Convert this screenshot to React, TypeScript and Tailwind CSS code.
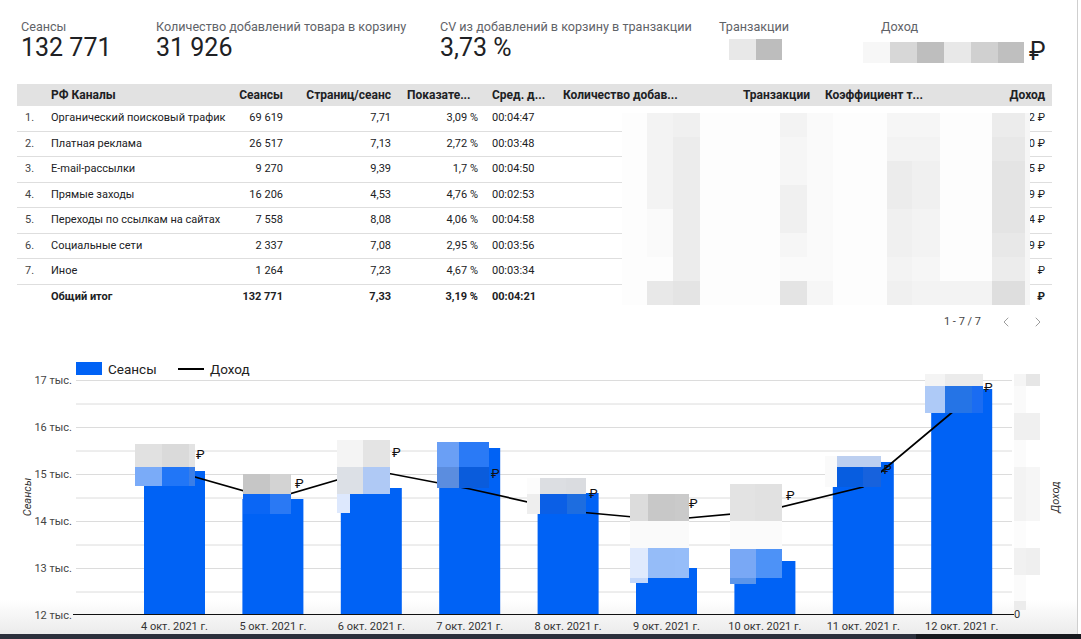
import React from 'react'
import { ChevronLeft, ChevronRight } from 'lucide-react'

type Cell = { x: number; y: number; w: number; h: number; c: string }

const rows = [
    ['1.', 'Органический поисковый трафик', '69 619', '7,71', '3,09 %', '00:04:47', '2 ₽'],
    ['2.', 'Платная реклама', '26 517', '7,13', '2,72 %', '00:03:48', '0 ₽'],
    ['3.', 'E-mail-рассылки', '9 270', '9,39', '1,7 %', '00:04:50', '5 ₽'],
    ['4.', 'Прямые заходы', '16 206', '4,53', '4,76 %', '00:02:53', '9 ₽'],
    ['5.', 'Переходы по ссылкам на сайтах', '7 558', '8,08', '4,06 %', '00:04:58', '4 ₽'],
    ['6.', 'Социальные сети', '2 337', '7,08', '2,95 %', '00:03:56', '9 ₽'],
    ['7.', 'Иное', '1 264', '7,23', '4,67 %', '00:03:34', '₽'],
]

// pixelated cover over the hidden columns of the table
const shade: Record<string, string> = {
    w: 'bg-[#fdfdfd]',
    v: 'bg-[#fafafa]',
    u: 'bg-[#f6f6f6]',
    t: 'bg-[#f3f3f3]',
    s: 'bg-[#f0f0f0]',
    r: 'bg-[#ececec]',
    q: 'bg-[#e8e8e8]',
    p: 'bg-[#e4e4e4]',
    o: 'bg-[#dedede]',
}
const coverRows = [
    'wtswtvwuuwru',
    'wtrwuvwttwqu',
    'wtrwuvwrswpu',
    'wtrwsvwrswpu',
    'wvrwsvwstwpu',
    'wvrwuvwstwqu',
    'wwrwvvwtuwru',
    'wqpwpuwsttou',
]

const ticks = [17, 16, 15, 14, 13, 12]
const days = ['4', '5', '6', '7', '8', '9', '10', '11', '12']
const tops = [471, 499, 488, 448, 493, 568, 561, 462, 389]
const centers = days.map((_, i) => 174.5 + i * 98.4)
const revenue: [number, number][] = [
    [174, 471], [272, 499], [371, 470], [470, 489], [568, 511],
    [666, 520], [765, 511], [863, 487], [961, 405],
]

const blurred: Cell[] = [
    // 4 окт
    { x: 135, y: 444, w: 27, h: 23, c: '#e1e1e1' }, { x: 162, y: 444, w: 27, h: 23, c: '#dadada' }, { x: 189, y: 444, w: 6, h: 23, c: '#e3e3e3' },
    { x: 135, y: 467, w: 27, h: 19, c: '#7aabf8' }, { x: 162, y: 467, w: 27, h: 19, c: '#2176f7' }, { x: 189, y: 467, w: 6, h: 19, c: '#3a7ee8' },
    // 5 окт
    { x: 243, y: 474, w: 27, h: 20, c: '#c6c6c6' }, { x: 270, y: 474, w: 21, h: 20, c: '#d3d3d3' },
    { x: 243, y: 494, w: 27, h: 20, c: '#0a66f5' }, { x: 270, y: 494, w: 21, h: 20, c: '#2a79f4' },
    // 6 окт
    { x: 337, y: 440, w: 26, h: 27, c: '#f4f4f4' }, { x: 363, y: 440, w: 27, h: 27, c: '#e4e4e4' },
    { x: 337, y: 467, w: 26, h: 27, c: '#dce0e6' }, { x: 363, y: 467, w: 27, h: 27, c: '#afc9f5' },
    { x: 337, y: 494, w: 13, h: 19, c: '#dde8fd' },
    // 7 окт
    { x: 437, y: 442, w: 22, h: 25, c: '#6a9ff5' }, { x: 459, y: 442, w: 30, h: 25, c: '#2a7af6' },
    { x: 437, y: 467, w: 22, h: 21, c: '#5b8ddf' }, { x: 459, y: 467, w: 30, h: 21, c: '#0a5cdc' },
    // 8 окт
    { x: 527, y: 478, w: 13, h: 16, c: '#fcfcfc' }, { x: 540, y: 478, w: 26, h: 16, c: '#dcdee2' }, { x: 566, y: 478, w: 20, h: 16, c: '#dadce0' },
    { x: 527, y: 494, w: 13, h: 20, c: '#eeeeee' }, { x: 540, y: 494, w: 27, h: 20, c: '#0b5fe6' }, { x: 567, y: 494, w: 19, h: 20, c: '#1d6de0' },
    // 9 окт
    { x: 630, y: 494, w: 18, h: 27, c: '#dcdcdc' }, { x: 648, y: 494, w: 27, h: 27, c: '#c8c8c8' }, { x: 675, y: 494, w: 14, h: 27, c: '#cacaca' },
    { x: 630, y: 521, w: 59, h: 27, c: '#fafafa' },
    { x: 630, y: 548, w: 18, h: 30, c: '#e0eafd' }, { x: 648, y: 548, w: 27, h: 30, c: '#95bcf8' }, { x: 675, y: 548, w: 14, h: 30, c: '#96bdf9' },
    { x: 630, y: 578, w: 18, h: 5, c: '#c4d8fb' },
    // 10 окт
    { x: 730, y: 484, w: 25, h: 37, c: '#e3e3e3' }, { x: 755, y: 484, w: 27, h: 37, c: '#e1e1e1' },
    { x: 730, y: 521, w: 52, h: 28, c: '#fbfbfb' },
    { x: 730, y: 549, w: 26, h: 29, c: '#79a8f5' }, { x: 756, y: 549, w: 26, h: 29, c: '#4d92f7' },
    { x: 730, y: 578, w: 26, h: 6, c: '#5b95ea' },
    // 11 окт
    { x: 825, y: 456, w: 12, h: 31, c: '#fafafa' }, { x: 837, y: 456, w: 44, h: 11, c: '#bccff0' },
    { x: 837, y: 467, w: 26, h: 20, c: '#075de0' }, { x: 863, y: 467, w: 18, h: 20, c: '#1762dd' },
    // 12 окт
    { x: 925, y: 374, w: 20, h: 12, c: '#f4f4f4' }, { x: 945, y: 374, w: 38, h: 12, c: '#ebebeb' },
    { x: 925, y: 386, w: 20, h: 27, c: '#aecaf7' }, { x: 945, y: 386, w: 27, h: 27, c: '#2574e6' }, { x: 972, y: 386, w: 11, h: 27, c: '#1a6cf2' },
    // right axis labels
    { x: 1014, y: 374, w: 12, h: 12, c: '#f5f5f5' }, { x: 1026, y: 374, w: 14, h: 12, c: '#e6e6e6' },
    { x: 1014, y: 386, w: 12, h: 27, c: '#fafafa' },
    { x: 1014, y: 413, w: 26, h: 27, c: '#f0f0f0' },
    { x: 1014, y: 440, w: 12, h: 27, c: '#fbfbfb' },
    { x: 1014, y: 467, w: 12, h: 54, c: '#f3f3f3' }, { x: 1026, y: 467, w: 14, h: 54, c: '#f6f6f6' },
    { x: 1014, y: 521, w: 12, h: 27, c: '#fcfcfc' },
    { x: 1014, y: 548, w: 12, h: 27, c: '#f1f1f1' }, { x: 1026, y: 548, w: 14, h: 27, c: '#efefef' },
    { x: 1014, y: 575, w: 12, h: 26, c: '#fbfbfb' },
    { x: 1014, y: 601, w: 12, h: 9, c: '#ececec' },
]

const rubles: [number, number][] = [
    [196, 459], [295, 488], [392, 457], [491, 478], [589, 498], [689, 508], [786, 500], [883, 474], [984, 392],
]

function Kpi({ label, value, className }: { label: string; value?: string; className: string }) {
    return (
        <div className={className}>
            <div className="text-[12.6px] leading-[16px] text-[#5f6368] whitespace-nowrap">{label}</div>
            {value && <div className="text-[25px] leading-[26px] text-[#202124]">{value}</div>}
        </div>
    )
}

function Chart() {
    const poly = revenue.map(([x, y]) => `${x},${y}`).join(' ')
    return (
        <svg width={1077} height={294} viewBox="0 340 1077 294" fontFamily="Roboto, sans-serif" className="block">
            <defs>
                <linearGradient id="floor" x1="0" y1="0" x2="0" y2="1">
                    <stop offset="0" stopColor="#ffffff" />
                    <stop offset="1" stopColor="#ebebeb" />
                </linearGradient>
            </defs>
            <rect x={0} y={600} width={1077} height={34} fill="url(#floor)" />

            {/* legend */}
            <rect x={76} y={362} width={26} height={13} fill="#0062f5" />
            <text x={108} y={374} fontSize={13.5} fill="#222">Сеансы</text>
            <line x1={178} y1={369} x2={204} y2={369} stroke="#000" strokeWidth={2} />
            <text x={210} y={374} fontSize={13.5} fill="#222">Доход</text>

            {/* grid */}
            {ticks.map((t, i) => (
                <g key={t}>
                    <text x={72} y={384 + i * 47} fontSize={11} fill="#444" textAnchor="end">{t} тыс.</text>
                    {i < 5 && <line x1={76} x2={1012} y1={380.5 + i * 47} y2={380.5 + i * 47} stroke="#dcdcdc" />}
                    {i < 5 && <line x1={76} x2={1012} y1={404 + i * 47} y2={404 + i * 47} stroke="#dcdcdc" />}
                </g>
            ))}

            {centers.map((cx, i) => (
                <rect key={i} x={cx - 30.5} y={tops[i]} width={61} height={614 - tops[i]} fill="#0062f5" />
            ))}

            <line x1={73} x2={1014} y1={614.5} y2={614.5} stroke="#111" strokeWidth={1.2} />
            <text x={1014} y={618} fontSize={11} fill="#333">0</text>

            <polyline points={poly} fill="none" stroke="#000" strokeWidth={1.7} />

            {blurred.map((b, i) => (
                <rect key={i} x={b.x} y={b.y} width={b.w} height={b.h} fill={b.c} />
            ))}
            {rubles.map(([x, y], i) => (
                <text key={i} x={x} y={y} fontSize={13} fill="#111">₽</text>
            ))}

            {centers.map((cx, i) => (
                <text key={i} x={cx} y={630} fontSize={11} fill="#333" textAnchor="middle">{days[i]} окт. 2021 г.</text>
            ))}

            <text x={31} y={497} fontSize={11} fill="#333" fontStyle="italic" textAnchor="middle" transform="rotate(-90 31 497)">Сеансы</text>
            <text x={1059} y={497} fontSize={11} fill="#333" fontStyle="italic" textAnchor="middle" transform="rotate(-90 1059 497)">Доход</text>
        </svg>
    )
}

export default function App() {
    return (
        <div className="w-[1081px] h-[639px] flex flex-col bg-white overflow-hidden font-['Roboto',sans-serif]">
            <div className="flex flex-1 min-h-0">
                <div className="w-[1077px] flex flex-col">
                    {/* KPI scorecards */}
                    <div className="h-[84px] flex pt-[19px] pl-[21px]">
                        <Kpi className="w-[135px]" label="Сеансы" value="132 771" />
                        <Kpi className="w-[284px]" label="Количество добавлений товара в корзину" value="31 926" />
                        <Kpi className="w-[279px]" label="CV из добавлений в корзину в транзакции" value="3,73 %" />
                        <div className="w-[144px]">
                            <div className="text-[12.6px] leading-[16px] text-[#5f6368]">Транзакции</div>
                            <div className="flex ml-[10px] mt-[4px]">
                                <div className="w-[27px] h-[21px] bg-[#e8e8e8]" />
                                <div className="w-[26px] h-[21px] bg-[#bdbdbd]" />
                            </div>
                        </div>
                        <div className="flex-1">
                            <div className="text-[12.6px] leading-[16px] text-[#5f6368] pl-[18px]">Доход</div>
                            <div className="flex items-center mt-[4px]">
                                <div className="w-[27px] h-[21px] bg-[#f7f7f7]" />
                                <div className="w-[27px] h-[21px] bg-[#d7d7d7]" />
                                <div className="w-[27px] h-[21px] bg-[#bebebe]" />
                                <div className="w-[27px] h-[21px] bg-[#e8e8e8]" />
                                <div className="w-[27px] h-[21px] bg-[#d0d0d0]" />
                                <div className="w-[26px] h-[21px] bg-[#bfbfbf]" />
                                <span className="ml-[5px] text-[25px] leading-[26px] text-[#202124]">₽</span>
                            </div>
                        </div>
                    </div>

                    {/* table */}
                    <div className="relative ml-[17px] w-[1035px] text-[11px] text-[#202124] whitespace-nowrap">
                        <div className="flex h-[22px] items-center bg-[#e2e2e2] font-bold text-[12px]">
                            <div className="w-[34px]" />
                            <div className="w-[179px]">РФ Каналы</div>
                            <div className="w-[53px] text-right">Сеансы</div>
                            <div className="w-[108px] text-right">Страниц/сеанс</div>
                            <div className="w-[87px] pl-[16px] truncate">Показате...</div>
                            <div className="w-[77px] pl-[14px] truncate">Сред. д...</div>
                            <div className="w-[145px] pl-[8px]">Количество добав...</div>
                            <div className="w-[110px] text-right">Транзакции</div>
                            <div className="w-[190px] pl-[15px]">Коэффициент т...</div>
                            <div className="w-[45px] text-right">Доход</div>
                        </div>
                        {rows.map((r) => (
                            <div key={r[0]} className="flex h-[25.5px] items-center border-b border-[#dedede]">
                                <div className="w-[34px] pl-[8px] text-[#444]">{r[0]}</div>
                                <div className="w-[179px]">{r[1]}</div>
                                <div className="w-[53px] text-right">{r[2]}</div>
                                <div className="w-[108px] text-right">{r[3]}</div>
                                <div className="w-[87px] text-right">{r[4]}</div>
                                <div className="w-[77px] pl-[14px]">{r[5]}</div>
                                <div className="flex-1 text-right">{r[6]}</div>
                                <div className="w-[7px]" />
                            </div>
                        ))}
                        <div className="flex h-[25.5px] items-center font-bold">
                            <div className="w-[34px]" />
                            <div className="w-[179px]">Общий итог</div>
                            <div className="w-[53px] text-right">132 771</div>
                            <div className="w-[108px] text-right">7,33</div>
                            <div className="w-[87px] text-right">3,19 %</div>
                            <div className="w-[77px] pl-[14px]">00:04:21</div>
                            <div className="flex-1 text-right">₽</div>
                            <div className="w-[7px]" />
                        </div>

                        {/* blurred columns */}
                        <div className="absolute left-[605px] top-[29px] grid grid-cols-[25px_26px_27px_80px_27px_26px_54px_25px_28px_52px_33px_5px]">
                            {coverRows.map((row, i) =>
                                row.split('').map((k, j) => <div key={i + '-' + j} className={'h-[24px] ' + shade[k]} />)
                            )}
                        </div>
                    </div>

                    {/* pagination */}
                    <div className="h-[30px] flex justify-end pr-[31px]">
                        <div className="h-[24px] flex items-center text-[11px] text-[#444]">
                            <span>1 - 7 / 7</span>
                            <ChevronLeft className="ml-[17px] w-[16px] h-[16px] text-[#9e9e9e]" strokeWidth={1.5} />
                            <ChevronRight className="ml-[16px] w-[16px] h-[16px] text-[#9e9e9e]" strokeWidth={1.5} />
                        </div>
                    </div>

                    <Chart />
                </div>
                <div className="w-px bg-[#cfcfcf]" />
                <div className="flex-1 bg-white" />
            </div>
            <div className="h-[5px] flex">
                <div className="w-[916px] bg-[#2c303c]" />
                <div className="flex-1 bg-[#17191e]" />
            </div>
        </div>
    )
}
